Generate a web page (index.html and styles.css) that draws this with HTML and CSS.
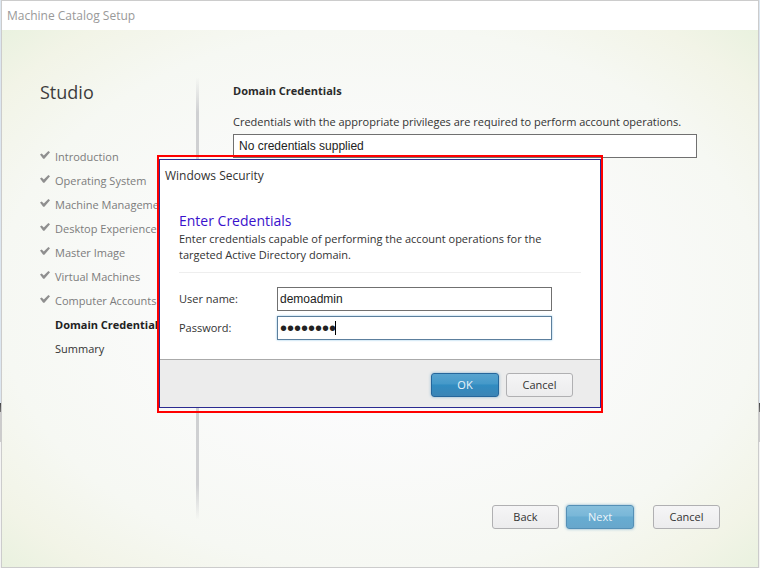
FILE: index.html
```html
<!DOCTYPE html>
<html lang="en">
<head>
<meta charset="utf-8">
<meta name="viewport" content="width=device-width, initial-scale=1">
<title>Machine Catalog Setup</title>
<link rel="stylesheet" href="styles.css">
</head>
<body>
<svg class="symbols" aria-hidden="true">
  <symbol id="check" viewBox="0 0 10 8"><path d="M0 3.6 L1.7 2.4 L3.8 4.6 L8.4 0 L10 1.2 L4.4 7.8 L3.2 7.8 Z"/></symbol>
</svg>
<div class="window">
  <header class="titlebar">Machine Catalog Setup</header>
  <div class="wizard">
    <div class="columns">
      <nav class="sidebar">
        <h1>Studio</h1>
        <ol class="steps">
          <li><svg class="tick"><use href="#check"/></svg>Introduction</li>
          <li><svg class="tick"><use href="#check"/></svg>Operating System</li>
          <li><svg class="tick"><use href="#check"/></svg>Machine Management</li>
          <li><svg class="tick"><use href="#check"/></svg>Desktop Experience</li>
          <li><svg class="tick"><use href="#check"/></svg>Master Image</li>
          <li><svg class="tick"><use href="#check"/></svg>Virtual Machines</li>
          <li><svg class="tick"><use href="#check"/></svg>Computer Accounts</li>
          <li class="current" aria-current="step">Domain Credentials</li>
          <li class="pending">Summary</li>
        </ol>
      </nav>
      <main class="content">
        <h2>Domain Credentials</h2>
        <label for="account">Credentials with the appropriate privileges are required to perform account operations.</label>
        <input class="account" id="account" type="text" value="No credentials supplied" readonly>
        <div class="actions">
          <button type="button">Back</button>
          <button type="button" class="primary soft">Next</button>
          <button type="button" class="apart">Cancel</button>
        </div>
      </main>
    </div>
  </div>
</div>
<div class="overlay">
  <div class="highlight">
    <form class="dialog" role="dialog" aria-labelledby="dialog-title">
      <div class="dialog-title" id="dialog-title">Windows Security</div>
      <div class="dialog-body">
        <h2>Enter Credentials</h2>
        <p>Enter credentials capable of performing the account operations for the targeted Active Directory domain.</p>
        <div class="fields">
          <label for="user">User name:</label>
          <input id="user" type="text" value="demoadmin">
          <label for="password">Password:</label>
          <div class="password">
            <input id="password" type="password" value="password">
            <span class="caret"></span>
          </div>
        </div>
      </div>
      <div class="dialog-actions">
        <button type="button" class="primary">OK</button>
        <button type="button">Cancel</button>
      </div>
    </form>
  </div>
</div>
</body>
</html>
```
FILE: styles.css
```css
* { box-sizing: border-box; }

body {
  margin: 0;
  min-height: 100vh;
  display: flex;
  padding: 0 1px;
  font: 11px/16px "Open Sans", "Noto Sans", sans-serif;
  color: #333;
  background: linear-gradient(#dce6f0 403px, #444 403px, #777 412px, #ccc 412px, #ccc 442px, #f4f4f4 442px);
}

h1, h2, p, ol { margin: 0; padding: 0; }
ol { list-style: none; }
.symbols { position: absolute; width: 0; height: 0; }

.window {
  flex: 1;
  display: flex;
  flex-direction: column;
  border: 1px solid #ccc;
  background: #fff;
}

.titlebar {
  height: 29px;
  padding: 0 5px;
  font-size: 12px;
  line-height: 29px;
  color: #999;
}

.wizard {
  flex: 1;
  display: flex;
  padding: 48px 38px 38px 38px;
  background: radial-gradient(ellipse 72% 72% at 50% 50%, #fbfbfc 30%, #f6f8f3 70%, #f2f4e7 87%, #e8f1de 100%);
}

.columns { flex: 1; display: flex; }

.sidebar {
  width: 159px;
  flex: none;
  margin-bottom: 10px;
  border-right: 3px solid;
  border-image: linear-gradient(#cfd0d200, #cfd0d2 8%, #cfd0d2 92%, #cfd0d200) 1;
  white-space: nowrap;
}

.sidebar h1 {
  margin: 0 0 39px;
  font-size: 18px;
  line-height: 28px;
  font-weight: 400;
  color: #3c3c3c;
}

.steps { width: 145px; }
.steps li {
  height: 24px;
  display: flex;
  line-height: 24px;
  color: #7c7c7c;
}
.steps .current, .steps .pending { padding-left: 15px; color: #333; }
.steps .current { font-weight: 700; color: #222; }

.tick { width: 10px; height: 8px; margin: 6px 5px 0 0; fill: #8f8f8f; flex: none; }

.content {
  flex: 1;
  min-width: 0;
  display: flex;
  flex-direction: column;
  padding: 5px 0 0 34px;
}

.content h2 { margin-bottom: 15px; font-size: 11px; line-height: 16px; color: #2b2b2b; }
.content label { margin-bottom: 4px; }

input {
  height: 24px;
  min-width: 0;
  width: 100%;
  padding: 0 2px;
  border: 1px solid #707070;
  border-radius: 0;
  background: #fff;
  color: #222;
  font: 12px/16px "Liberation Sans", sans-serif;
  outline: 0;
}

.content .account { width: auto; margin-right: 23px; padding: 0 5px; }

.actions { display: flex; justify-content: flex-end; gap: 7px; margin-top: auto; }
.apart { margin-left: 12px; }

button {
  width: 67px;
  height: 24px;
  padding: 0;
  border: 1px solid #b0b0b2;
  border-radius: 3px;
  background: linear-gradient(#f5f5f6, #ececed);
  color: #333;
  font: inherit;
}

.primary {
  width: 68px;
  border-color: #25669b;
  background: linear-gradient(#57a3cf, #4599c9 45%, #318cc1 50%, #3b84b5);
  color: #edf5fa;
  box-shadow: 0 0 3px #7daecb;
}
.soft {
  border-color: #5590b6;
  background: linear-gradient(#87bfdc, #79b7d8 45%, #67acd1 50%, #68a7cc);
}

/* Centred modal over the wizard */
.overlay {
  position: absolute;
  inset: 0;
  display: grid;
  place-items: center;
}

.highlight { width: 446px; max-width: 100%; border: 2px solid #f00; padding: 2px 0 3px; }
.dialog { border: 1px solid #2b2b91; background: #fff; }
.dialog-title { padding: 8px 5px 0; font-size: 12px; }
.dialog-body { padding: 27px 19px 19px; }
.dialog-body h2 { font-size: 14px; line-height: 20px; font-weight: 400; color: #3a12cc; }

.fields {
  display: grid;
  grid-template-columns: 98px 1fr;
  align-items: center;
  row-gap: 5px;
  margin-top: 9px;
  padding: 14px 29px 0 0;
  border-top: 1px solid #eee;
}

.password { position: relative; display: flex; }
.password input {
  border-color: #5c7f9d;
  box-shadow: 0 0 2px #8dc5e6;
  font-size: 20px;
}
.caret { position: absolute; left: 58px; top: 5px; width: 1px; height: 14px; background: #000; }

.dialog-actions {
  display: flex;
  justify-content: flex-end;
  gap: 7px;
  padding: 13px 27px 10px;
  border-top: 1px solid #aaa;
  background: #ececec;
}
```
